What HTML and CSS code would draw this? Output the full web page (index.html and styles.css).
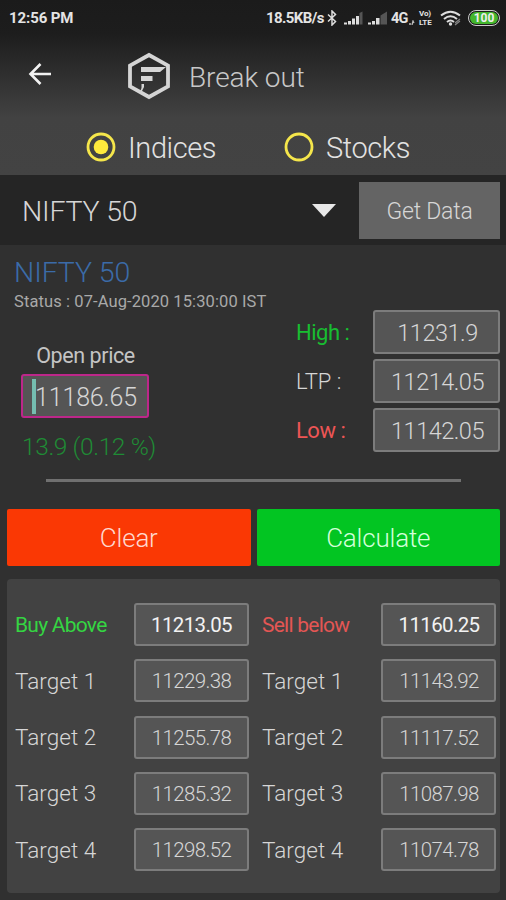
FILE: index.html
```html
<!DOCTYPE html>
<html lang="en">
<head>
<meta charset="utf-8">
<title>Break out</title>
<link rel="stylesheet" href="styles.css">
</head>
<body>
<div class="top">
  <div class="statusbar">
    <span class="clock">12:56 PM</span>
    <span class="speed">18.5KB/s</span>
    <svg class="bt" width="10" height="16" viewBox="0 0 10 16"><path d="M1 4.500l7.500 7L5 15V1l3.500 3.500-7.500 7" fill="none" stroke="#ddd" stroke-width="1.500"/></svg>
    <svg class="sig1" width="19" height="14" viewBox="0 0 19 14"><path d="M0 13.500v-2h3v2zM4 13.500V10h3v3.500zM8 13.500V7.500h3v6zM12 13.500V5h3v8.500z" fill="#ddd"/><path d="M15.500 13.500V2l3-1.500v13z" fill="#555"/></svg>
    <svg class="sig2" width="19" height="14" viewBox="0 0 19 14"><path d="M0 13.500v-2h3v2zM4 13.500V10h3v3.500zM8 13.500V7h3.500v6.500z" fill="#ddd"/><path d="M12.500 13.500V4.500l6.500-4v13z" fill="#555"/></svg>
    <span class="net">4G</span>
    <svg class="data" width="6" height="5" viewBox="0 0 6 5"><path d="M0 4h2M3 5l1-4 1 2" fill="none" stroke="#bbb" stroke-width="1.300"/></svg>
    <span class="volte"><span>Vo)</span><span>LTE</span></span>
    <svg class="wifi" width="22" height="16" viewBox="0 0 22 16"><g fill="none" stroke="#ddd" stroke-width="2"><path d="M1 5.500Q10.500-2 20 5.500"/><path d="M4 9Q10.500 3.500 17 9"/><path d="M7 12Q10.500 9 14 12"/></g><circle cx="10.500" cy="14" r="1.700" fill="#ddd"/><path d="M15 13l5-4M15 15l5-4" stroke="#888" stroke-width="1.200"/></svg>
    <span class="battery"><span class="charge">100</span></span>
  </div>
  <div class="appbar">
    <svg class="back" width="24" height="24" viewBox="0 0 24 24"><path d="M23 12H2.500M12.500 2L2.500 12l10 10" fill="none" stroke="#f2f2f2" stroke-width="2.600"/></svg>
    <svg class="logo" width="44" height="48" viewBox="0 0 44 48"><path d="M22 3L41 13.500v21L22 45 3 34.500v-21z" fill="none" stroke="#d5d5d5" stroke-width="3.800"/><path d="M14 15H39L33 20H14zM14 24h11.500v5H14zM14.500 32h2.500v3L14.500 40H13l1.500-4z" fill="#d5d5d5"/></svg>
    <span class="title">Break out</span>
  </div>
  <div class="modes">
    <div class="mode"><svg width="30" height="30" viewBox="0 0 30 30"><circle cx="15" cy="15" r="13" fill="none" stroke="#f5e64b" stroke-width="2.800"/><circle cx="15" cy="15" r="7.300" fill="#ffea3c"/></svg><span class="name">Indices</span></div>
    <div class="mode"><svg width="30" height="30" viewBox="0 0 30 30"><circle cx="15" cy="15" r="13" fill="none" stroke="#f5e64b" stroke-width="2.800"/></svg><span class="name">Stocks</span></div>
  </div>
</div>
<div class="picker">
  <span class="selected">NIFTY 50</span>
  <svg class="caret" width="24" height="13" viewBox="0 0 24 13"><path d="M0 0h24L12 13z" fill="#e8e8e8"/></svg>
  <button class="get">Get Data</button>
</div>
<div class="quote">
  <div class="left">
    <div class="symbol">NIFTY 50</div>
    <div class="status">Status : 07-Aug-2020 15:30:00 IST</div>
    <div class="openlabel"><span>Open price</span></div>
    <div class="openbox"><span class="cursor"></span><span class="openvalue">11186.65</span></div>
    <div class="change">13.9 (0.12 %)</div>
  </div>
  <div class="levels">
    <span class="up">High :</span><span class="box">11231.9</span>
    <span>LTP :</span><span class="box">11214.05</span>
    <span class="down">Low :</span><span class="box">11142.05</span>
  </div>
</div>
<div class="rule"></div>
<div class="actions"><button class="clear">Clear</button><button class="calc">Calculate</button></div>
<div class="table">
  <span class="buy">Buy Above</span><span class="cell strong">11213.05</span><span class="sell">Sell below</span><span class="cell strong">11160.25</span>
  <span>Target 1</span><span class="cell">11229.38</span><span>Target 1</span><span class="cell">11143.92</span>
  <span>Target 2</span><span class="cell">11255.78</span><span>Target 2</span><span class="cell">11117.52</span>
  <span>Target 3</span><span class="cell">11285.32</span><span>Target 3</span><span class="cell">11087.98</span>
  <span>Target 4</span><span class="cell">11298.52</span><span>Target 4</span><span class="cell">11074.78</span>
</div>
</body>
</html>
```
FILE: styles.css
```css
* { box-sizing: border-box; }
body {
  margin: 0;
  width: 506px;
  height: 900px;
  overflow: hidden;
  background: #303030;
  color: #d6d6d6;
  font-family: Roboto, "Liberation Sans", sans-serif;
  font-weight: 300;
  white-space: nowrap;
}
svg { display: block; flex: none; }
button { border: 0; padding: 0; font: inherit; color: inherit; letter-spacing: inherit; }
.top {
  height: 175px;
  background: linear-gradient(#1b1b1b 0, #1d1d1d 34px, #424242 118px, #434343 175px);
}
.statusbar {
  display: flex;
  align-items: center;
  height: 36px;
  padding-left: 9px;
  color: #e4e4e4;
  font-size: 15px;
  font-weight: 700;
}
.clock { width: 257px; letter-spacing: -0.1px; }
.speed { width: 61px; letter-spacing: -0.6px; }
.bt { margin-right: 7px; }
.sig1 { margin-right: 5px; }
.sig2 { margin-right: 4px; }
.net { width: 18px; font-size: 14.5px; letter-spacing: -0.8px; }
.data { margin: 8px 4px 0 0; }
.volte { display: flex; flex-direction: column; gap: 1px; width: 21px; font-size: 8px; line-height: 8px; letter-spacing: -0.1px; }
.wifi { margin-right: 6px; }
.battery {
  display: flex;
  width: 32px;
  height: 16px;
  padding: 1px;
  border: 1.5px solid #ccc;
  border-radius: 8px;
}
.charge {
  flex: 1;
  border-radius: 6px;
  background: #43b62d;
  color: #eee;
  font-size: 12px;
  line-height: 12px;
  text-align: center;
}
.appbar { display: flex; align-items: center; height: 82px; padding-left: 28px; }
.back { margin: -7px 75px 0 0; }
.logo { margin: -2px 18px 0 0; }
.title { font-size: 28px; color: #c8c8c8; letter-spacing: -0.1px; }
.modes { display: flex; height: 57px; padding: 14px 0 0 86px; }
.mode { display: flex; align-items: center; width: 198px; height: 30px; gap: 12px; color: #e2e2e2; font-size: 29px; letter-spacing: -0.4px; }
.name { padding-top: 2px; }
.picker { display: flex; align-items: center; height: 70px; padding: 0 6px 0 22px; background: #252525; }
.selected { width: 290px; padding-top: 2px; font-size: 28.5px; letter-spacing: -0.2px; }
.caret { margin-right: 23px; }
.get { width: 141px; height: 57px; padding-top: 2px; background: #646464; font-size: 23px; letter-spacing: -0.2px; }
.quote { display: flex; height: 234px; }
.left { width: 296px; padding: 11px 0 0 14px; }
.symbol { height: 33px; line-height: 33px; font-size: 28.5px; letter-spacing: -0.1px; color: #3b6ba8; }
.status { height: 25px; line-height: 26px; font-size: 16.5px; letter-spacing: 0.1px; color: #a9a9a9; font-weight: 400; }
.openlabel { width: 143px; margin-top: 27px; height: 28px; line-height: 29px; text-align: center; font-size: 21.5px; font-weight: 400; letter-spacing: -0.4px; color: #c4c4c4; }
.openbox {
  display: flex;
  align-items: center;
  width: 128px;
  height: 44px;
  margin: 5px 0 0 7px;
  padding-left: 9px;
  border: 2px solid #bd278a;
  border-radius: 3px;
  background: #555;
  font-size: 25px;
}
.cursor { width: 4px; height: 35px; margin-right: -1px; background: #75bdb0; }
.openvalue { padding-top: 3px; letter-spacing: -0.15px; }
.change { margin: 12px 0 0 8px; line-height: 34px; font-size: 24.5px; letter-spacing: -0.4px; color: #1f8b35; }
.levels {
  display: grid;
  grid-template-columns: 77px 127px;
  grid-auto-rows: 44px;
  row-gap: 5px;
  align-items: center;
  align-content: start;
  padding-top: 65px;
  font-size: 22px;
}
.box, .cell {
  display: flex;
  align-items: center;
  justify-content: center;
  height: 44px;
  padding-top: 1px;
  border: 2px solid #7c7c7c;
  border-radius: 3px;
  background: #555;
}
.box { font-size: 23.5px; letter-spacing: -0.5px; padding-left: 2px; }
.up { color: #18bd31; font-weight: 400; letter-spacing: -0.5px; }
.down { color: #ed5555; font-weight: 400; letter-spacing: -0.5px; }
.rule { width: 415px; height: 3px; margin-left: 46px; background: #707070; }
.actions { display: flex; gap: 6px; margin: 27px 6px 0 7px; }
.actions button { flex: 1; height: 57px; padding-top: 1px; border-radius: 2px; font-size: 26px; letter-spacing: -0.2px; }
.actions .clear { background: #fa3804; color: #ffd8d0; }
.actions .calc { background: #02c522; color: #d3ffd9; }
.table {
  display: grid;
  grid-template-columns: 118.5px 128.5px 119px 115px;
  grid-auto-rows: 43px;
  row-gap: 13.3px;
  align-items: center;
  height: 314px;
  margin: 13px 6px 0 7px;
  padding: 24px 0 0 8px;
  border-radius: 4px;
  background: #424242;
  font-size: 22.5px;
  letter-spacing: 0.05px;
}
.cell { width: 115px; height: 43px; padding-left: 1px; font-size: 20.5px; letter-spacing: -0.65px; }
.strong { font-weight: 400; color: #f2f2f2; }
.buy { color: #35d542; font-weight: 400; font-size: 21px; letter-spacing: -0.75px; }
.sell { color: #e45654; font-weight: 400; font-size: 21px; letter-spacing: -0.75px; }
```
